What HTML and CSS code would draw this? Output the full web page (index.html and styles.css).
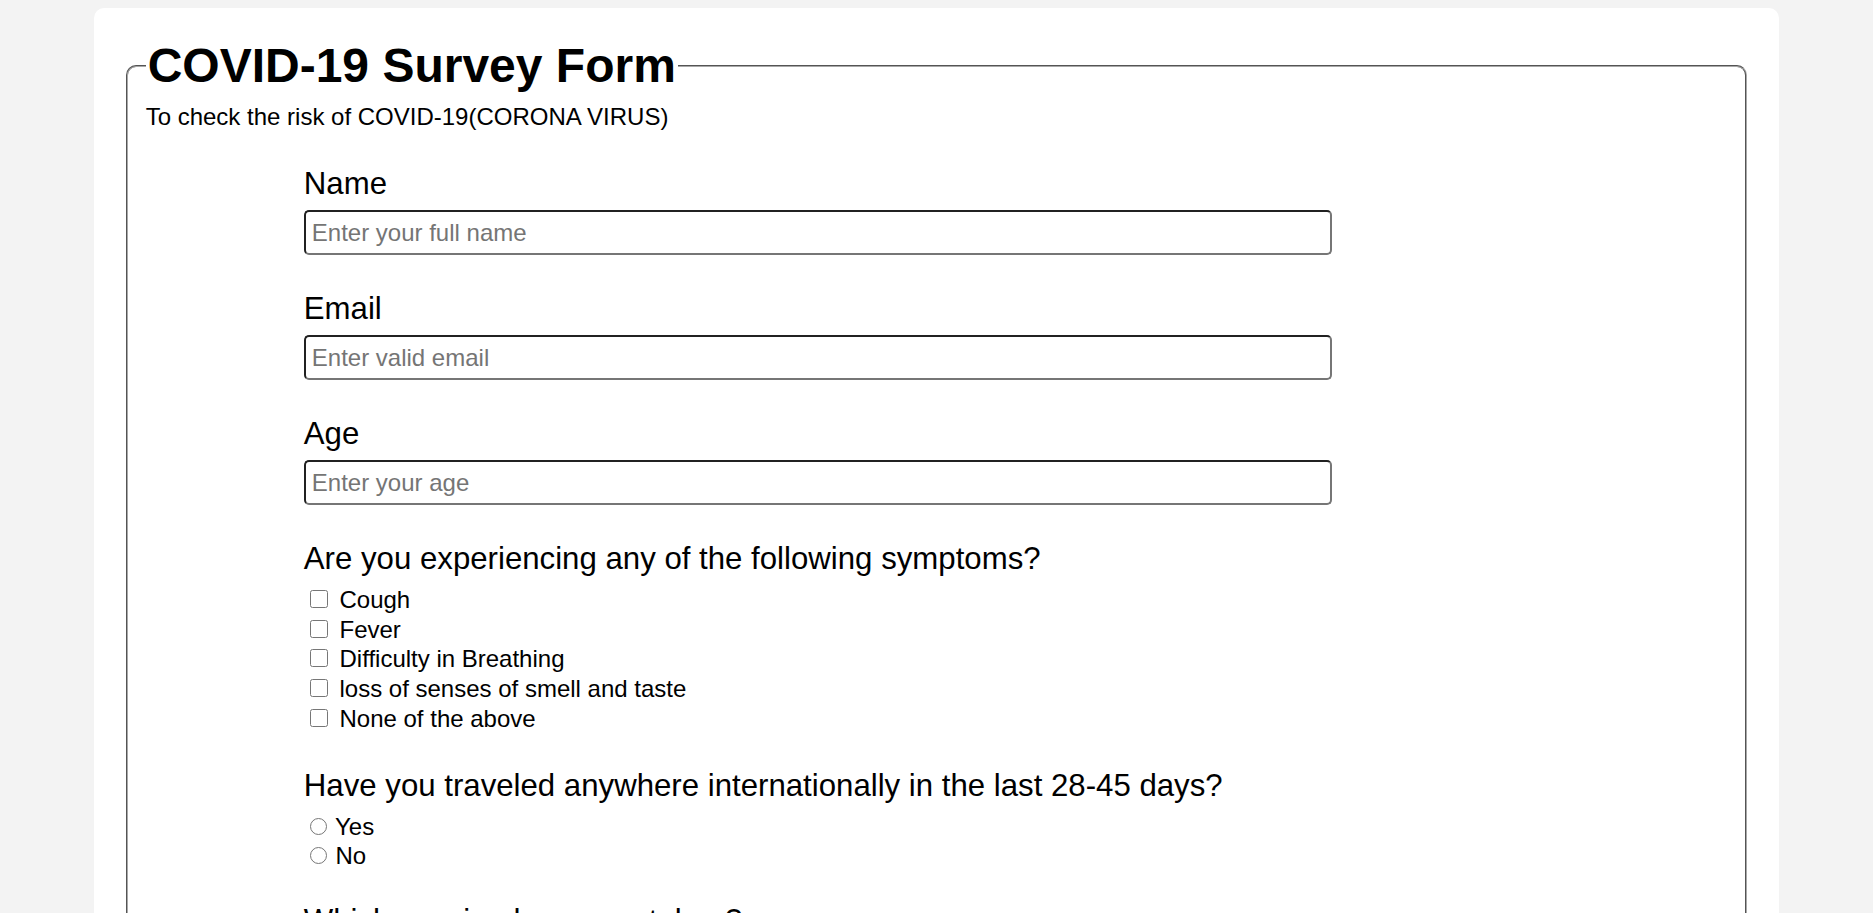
FILE: index.html
```html
<!DOCTYPE html>
<html lang="en">
<head>
<meta charset="utf-8">
<title>COVID-19 Survey Form</title>
<link rel="stylesheet" href="styles.css">
</head>
<body>
<main class="page">
  <form class="survey" id="survey-form">
    <fieldset class="survey-fieldset">
      <legend class="survey-title" id="title">COVID-19 Survey Form</legend>
      <p class="survey-description" id="description">To check the risk of COVID-19(CORONA VIRUS)</p>
      <div class="survey-body">
        <div class="form-group">
          <label class="form-label" for="name" id="name-label">Name</label>
          <input class="form-input" type="text" id="name" placeholder="Enter your full name">
        </div>
        <div class="form-group">
          <label class="form-label" for="email" id="email-label">Email</label>
          <input class="form-input" type="email" id="email" placeholder="Enter valid email">
        </div>
        <div class="form-group">
          <label class="form-label" for="number" id="number-label">Age</label>
          <input class="form-input" type="number" id="number" placeholder="Enter your age">
        </div>
        <div class="form-group form-group-options">
          <p class="form-label">Are you experiencing any of the following symptoms?</p>
          <div class="option-list">
            <label class="option"><input class="option-check" type="checkbox" name="symptom" value="cough"> Cough</label>
            <label class="option"><input class="option-check" type="checkbox" name="symptom" value="fever"> Fever</label>
            <label class="option"><input class="option-check" type="checkbox" name="symptom" value="breathing"> Difficulty in Breathing</label>
            <label class="option"><input class="option-check" type="checkbox" name="symptom" value="smell"> loss of senses of smell and taste</label>
            <label class="option"><input class="option-check" type="checkbox" name="symptom" value="none"> None of the above</label>
          </div>
        </div>
        <div class="form-group form-group-options form-group-radios">
          <p class="form-label">Have you traveled anywhere internationally in the last 28-45 days?</p>
          <div class="option-list">
            <label class="option"><input class="option-radio" type="radio" name="travel" value="yes"> Yes</label>
            <label class="option"><input class="option-radio" type="radio" name="travel" value="no"> No</label>
          </div>
        </div>
        <div class="form-group form-group-options form-group-radios">
          <p class="form-label">Which vaccine have you taken?</p>
          <div class="option-list">
            <label class="option"><input class="option-radio" type="radio" name="vaccine" value="first"> First dose</label>
            <label class="option"><input class="option-radio" type="radio" name="vaccine" value="both"> Both doses</label>
            <label class="option"><input class="option-radio" type="radio" name="vaccine" value="none"> Not yet</label>
          </div>
        </div>
        <div class="form-group">
          <button class="submit-button" type="submit" id="submit">Submit</button>
        </div>
      </div>
    </fieldset>
  </form>
</main>
</body>
</html>
```

FILE: styles.css
```css
html, body {
  margin: 0;
  padding: 0;
}

body {
  background: #f3f3f3;
  font-family: "Liberation Sans", Arial, sans-serif;
  font-size: 24px;
  color: #000;
}

.page {
  width: 90%;
  margin: 8px auto;
  background: #fff;
  border-radius: 10px;
  padding: 30px 30px;
  box-sizing: border-box;
}

.survey {
  margin: 0;
}

.survey-fieldset {
  margin: 0 2px;
  border: 2px groove #a8a8a8;
  border-radius: 10px;
  padding: 10px 18px 15px;
}

.survey-title {
  font-size: 48px;
  font-weight: bold;
  padding: 0 2px;
}

.survey-description {
  margin: 0;
}

.survey-body {
  margin: 35px 0 0 10%;
  width: 65%;
  display: flex;
  flex-direction: column;
}

.form-group {
  display: flex;
  flex-direction: column;
  margin-bottom: 36px;
}

.form-group-options {
  margin-bottom: 34px;
}

.form-group-radios {
  margin-bottom: 32px;
}

.form-label {
  display: block;
  margin: 0 0 8px;
  font-size: 1.3em;
}

.form-group-options .form-label {
  margin-bottom: 8px;
}

.form-input {
  font-family: inherit;
  font-size: 24px;
  padding: 6.5px 6px;
  border-radius: 5px;
  box-sizing: border-box;
  width: 100%;
}

.form-input::placeholder {
  color: #757575;
}

.option-list {
  display: flex;
  flex-direction: column;
}

.option {
  display: block;
  line-height: 29.7px;
}

.option-check {
  width: 18px;
  height: 18px;
  margin: 3px 5px 1px 6px;
}

.option-radio {
  width: 17px;
  height: 17px;
  margin: 3px 2px 0 6px;
}

.submit-button {
  font-family: inherit;
  font-size: 24px;
  padding: 8px 24px;
  align-self: flex-start;
}
```
